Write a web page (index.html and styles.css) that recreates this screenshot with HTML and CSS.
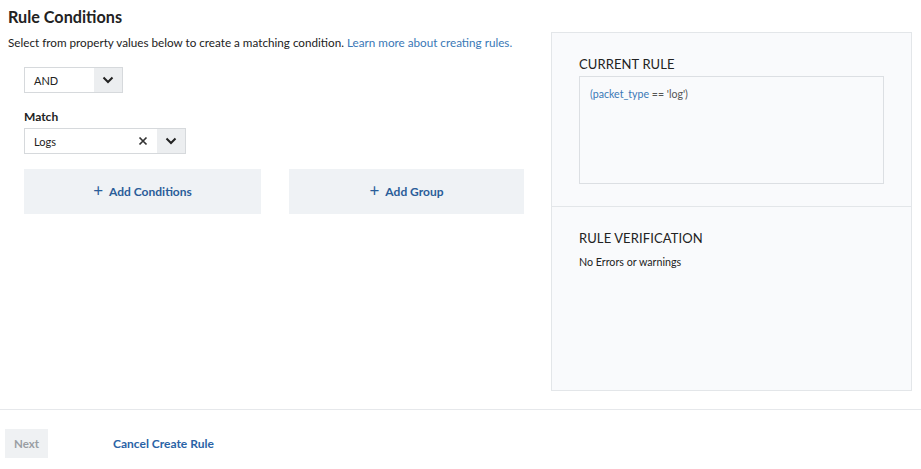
FILE: index.html
```html
<!DOCTYPE html>
<html>
<head>
<meta charset="utf-8">
<link rel="stylesheet" href="styles.css">
</head>
<body>
<div class="page">
  <div class="main">
    <div class="left">
      <h1 class="title">Rule Conditions</h1>
      <p class="subtitle">Select from property values below to create a matching condition. <a class="link" href="#">Learn more about creating rules.</a></p>
      <div class="builder">
        <div class="select select-op">
          <span class="select-value">AND</span>
          <span class="select-arrow"><svg width="12" height="8" viewBox="0 0 12 8"><path d="M1.5 1.5 L6 6 L10.5 1.5" fill="none" stroke="#222" stroke-width="2"/></svg></span>
        </div>
        <div class="label">Match</div>
        <div class="select select-match">
          <span class="select-value">Logs</span>
          <span class="select-clear"><svg width="10" height="10" viewBox="0 0 10 10"><path d="M1.5 1.5 L8.5 8.5 M8.5 1.5 L1.5 8.5" fill="none" stroke="#333" stroke-width="1.7"/></svg></span>
          <span class="select-arrow"><svg width="12" height="8" viewBox="0 0 12 8"><path d="M1.5 1.5 L6 6 L10.5 1.5" fill="none" stroke="#222" stroke-width="2"/></svg></span>
        </div>
        <div class="actions">
          <button class="add-btn add-cond"><span class="plus">+</span>Add Conditions</button>
          <button class="add-btn add-group"><span class="plus">+</span>Add Group</button>
        </div>
      </div>
    </div>
    <div class="panel">
      <div class="panel-section section-rule">
        <div class="panel-heading">CURRENT RULE</div>
        <div class="rule-box"><span class="rule-key">(packet_type</span> == 'log')</div>
      </div>
      <div class="panel-section section-verify">
        <div class="panel-heading">RULE VERIFICATION</div>
        <div class="verify-text">No Errors or warnings</div>
      </div>
    </div>
  </div>
  <div class="footer">
    <button class="next-btn">Next</button>
    <a class="cancel" href="#">Cancel Create Rule</a>
  </div>
</div>
</body>
</html>
```
FILE: styles.css
```css
* { box-sizing: border-box; }
html, body { margin: 0; padding: 0; background: #fff; }
body { font-family: "Lato", "Open Sans", sans-serif; color: #222; width: 921px; height: 469px; overflow: hidden; }
.page { display: flex; flex-direction: column; height: 469px; }
.main { display: flex; height: 410px; border-bottom: 1px solid #e6e8eb; }
.left { width: 551px; padding: 7px 0 0 8px; }
.title { margin: 0; font-size: 16.2px; font-weight: 700; line-height: 20px; color: #222; }
.subtitle { margin: 8px 0 0; font-size: 11.7px; line-height: 14px; color: #222; }
.link { color: #3a78b6; text-decoration: none; }
.builder { padding-left: 16px; padding-top: 18px; }
.select { display: flex; align-items: stretch; height: 26px; border: 1px solid #d6d9dc; background: #fff; }
.select-op { width: 99px; }
.select-match { width: 162px; }
.select-value { flex: 1; font-size: 11px; display: flex; align-items: center; padding-left: 9px; }
.select-clear { width: 28px; display: flex; align-items: center; justify-content: center; }
.select-arrow { width: 28px; background: #eceef0; display: flex; align-items: center; justify-content: center; }
.label { font-size: 12px; font-weight: 700; margin-top: 16px; margin-bottom: 4px; line-height: 15px; }
.actions { display: flex; gap: 28px; margin-top: 15px; }
.add-btn { height: 45px; border: none; background: #eff2f5; color: #2a5d99; font-family: inherit; font-size: 12px; font-weight: 700; display: flex; align-items: center; justify-content: center; padding: 0; }
.add-cond { width: 237px; }
.add-group { width: 235px; }
.plus { font-size: 17px; font-weight: 400; margin-right: 6px; line-height: 1; position: relative; top: -1px; }
.panel { width: 361px; margin-top: 32px; height: 359px; border: 1px solid #e3e6e9; background: #f9fafc; display: flex; flex-direction: column; }
.panel-section { padding: 0 27px; }
.section-rule { height: 174px; border-bottom: 1px solid #e3e6e9; padding-top: 23px; }
.section-verify { padding-top: 23px; }
.panel-heading { font-size: 13px; color: #222; line-height: 16px; letter-spacing: 0.1px; }
.rule-box { margin-top: 4px; height: 108px; width: 305px; border: 1px solid #dcdfe3; background: #f9fafc; font-size: 10.6px; padding: 11px 10px; color: #555; }
.rule-key { color: #3a78b6; }
.verify-text { margin-top: 9px; font-size: 10.7px; color: #222; }
.footer { display: flex; align-items: center; padding: 19px 0 0 5px; }
.next-btn { width: 43px; height: 29px; border: none; background: #eff1f3; color: #9a9ea3; font-family: inherit; font-weight: 700; font-size: 11.5px; padding: 0; }
.cancel { margin-left: 65px; color: #2a63a6; font-weight: 700; font-size: 12px; text-decoration: none; }
```
